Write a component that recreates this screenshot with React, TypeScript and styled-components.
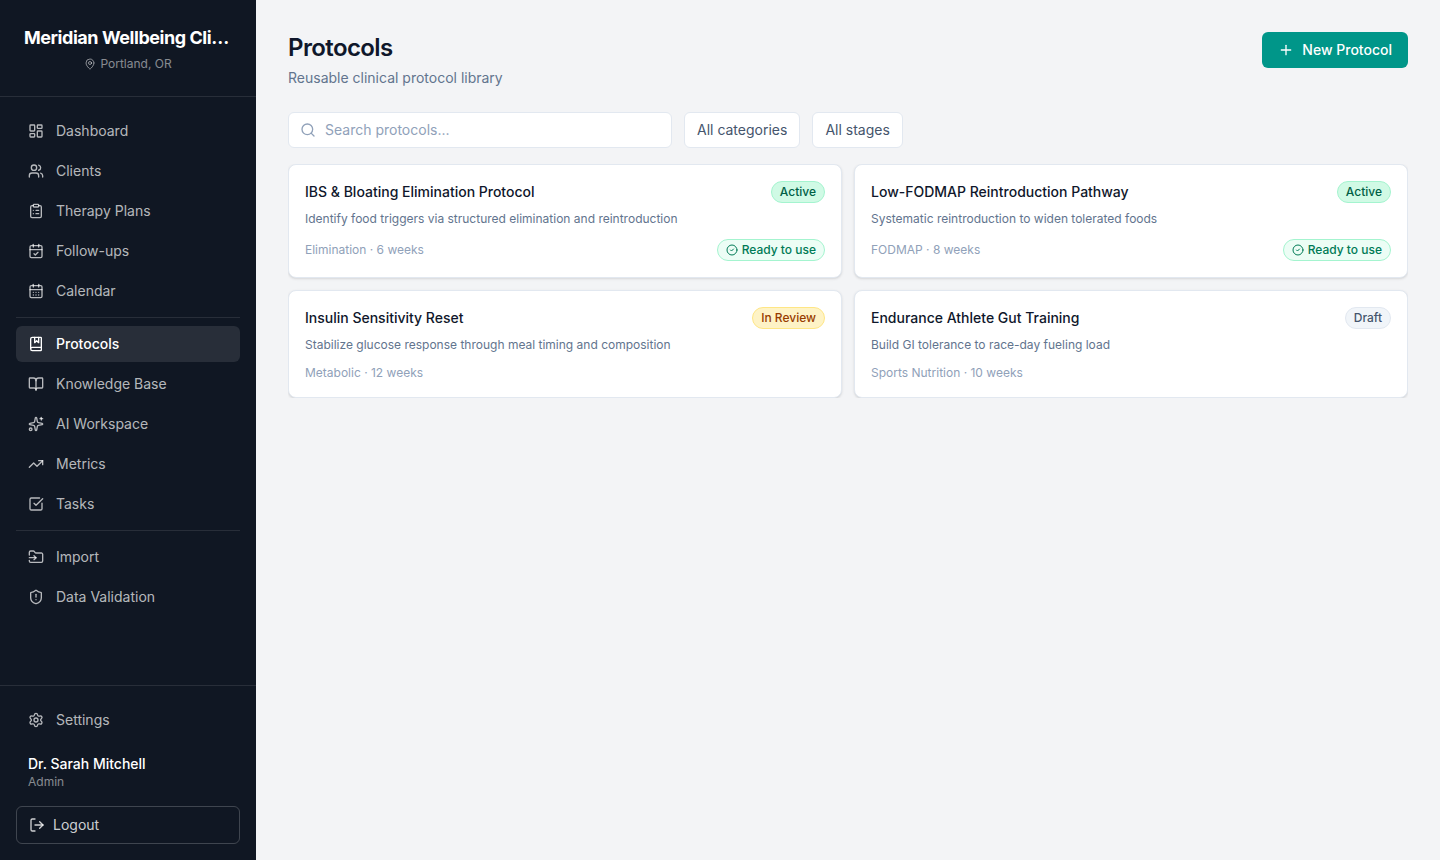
import React from "react";
import styled, { createGlobalStyle, css } from "styled-components";
import {
  BookMarked,
  BookOpen,
  CalendarCheck,
  CalendarDays,
  CircleCheck,
  ClipboardList,
  FolderInput,
  LayoutDashboard,
  LogOut,
  MapPin,
  Plus,
  Search,
  Settings,
  ShieldAlert,
  Sparkles,
  SquareCheckBig,
  TrendingUp,
  Users,
  type LucideIcon,
} from "lucide-react";

const GlobalStyle = createGlobalStyle`
  *, *::before, *::after { box-sizing: border-box; }
  body {
    margin: 0;
    background: #f3f4f6;
    color: #0f172b;
    font-family: Inter, "Liberation Sans", sans-serif;
    font-size: 14px;
    line-height: 20px;
  }
  h1, h2, p { margin: 0; }
  button, input, select { font: inherit; }
`;

const tightTracking = css`
  letter-spacing: -0.025em;
`;

const Shell = styled.div`
  display: flex;
  min-height: 100vh;
`;

const Sidebar = styled.aside`
  display: flex;
  flex-direction: column;
  flex: 0 0 256px;
  min-width: 0;
  height: 100vh;
  position: sticky;
  top: 0;
  background: #101723;
  color: #fff;
`;

const Brand = styled.div`
  padding: 24px;
  border-bottom: 1px solid rgba(255, 255, 255, 0.1);
  text-align: center;
`;

const BrandName = styled.div`
  ${tightTracking}
  overflow: hidden;
  text-overflow: ellipsis;
  white-space: nowrap;
  font-size: 18px;
  line-height: 28px;
  font-weight: 700;
`;

const Location = styled.div`
  display: flex;
  align-items: center;
  justify-content: center;
  gap: 4px;
  margin-top: 4px;
  font-size: 12px;
  line-height: 16px;
  color: rgba(255, 255, 255, 0.5);
`;

const Nav = styled.nav`
  display: flex;
  flex: 1;
  flex-direction: column;
  gap: 4px;
  padding: 16px;
  overflow-y: auto;
`;

const NavLink = styled.a<{ $active?: boolean }>`
  display: flex;
  flex-shrink: 0;
  align-items: center;
  gap: 12px;
  height: 36px;
  padding: 0 12px;
  border-radius: 6px;
  color: rgba(255, 255, 255, 0.7);
  text-decoration: none;
  ${(p) =>
    p.$active &&
    css`
      background: rgba(255, 255, 255, 0.1);
      color: #fff;
      font-weight: 500;
    `}
`;

const Divider = styled.hr`
  width: 100%;
  height: 1px;
  margin: 4px 0;
  border: 0;
  flex-shrink: 0;
  background: rgba(255, 255, 255, 0.1);
`;

const SidebarFooter = styled.div`
  display: flex;
  flex-direction: column;
  gap: 16px;
  padding: 16px;
  border-top: 1px solid rgba(255, 255, 255, 0.1);
`;

const Account = styled.div`
  padding: 0 12px;
`;

const AccountName = styled.p`
  font-weight: 500;
`;

const AccountRole = styled.p`
  font-size: 12px;
  line-height: 16px;
  color: rgba(255, 255, 255, 0.5);
`;

const LogoutButton = styled.button`
  display: flex;
  align-items: center;
  gap: 8px;
  height: 38px;
  padding: 0 12px;
  border: 1px solid rgba(255, 255, 255, 0.2);
  border-radius: 6px;
  background: transparent;
  color: rgba(255, 255, 255, 0.8);
  cursor: pointer;
`;

const Main = styled.main`
  flex: 1;
  min-width: 0;
  padding: 32px;
`;

const PageHeader = styled.header`
  display: flex;
  align-items: flex-start;
  justify-content: space-between;
  margin-bottom: 24px;
`;

const PageTitle = styled.h1`
  ${tightTracking}
  font-size: 24px;
  line-height: 32px;
  font-weight: 600;
`;

const PageSubtitle = styled.p`
  margin-top: 4px;
  color: #62748e;
`;

const PrimaryButton = styled.button`
  display: flex;
  align-items: center;
  gap: 8px;
  height: 36px;
  padding: 0 16px;
  border: 0;
  border-radius: 6px;
  background: #009689;
  color: #fff;
  font-weight: 500;
  cursor: pointer;
`;

const Filters = styled.div`
  display: flex;
  gap: 12px;
  margin-bottom: 16px;
`;

const control = css`
  height: 36px;
  border: 1px solid #e2e8f0;
  border-radius: 6px;
  background: #fff;
`;

const SearchField = styled.div`
  position: relative;
  flex: 0 1 384px;
`;

const SearchIcon = styled(Search)`
  position: absolute;
  top: 10px;
  left: 12px;
  color: #90a1b9;
  pointer-events: none;
`;

const SearchInput = styled.input`
  ${control}
  display: block;
  width: 100%;
  padding: 0 12px 2px 36px;
  color: #0f172b;
  &::placeholder {
    color: #90a1b9;
  }
`;

const FilterSelect = styled.select`
  ${control}
  appearance: none;
  field-sizing: content;
  padding: 0 12px;
  color: #45556c;
`;

const CardGrid = styled.section`
  display: grid;
  grid-template-columns: repeat(2, minmax(0, 1fr));
  gap: 12px;
  overflow: hidden;
`;

const Card = styled.article`
  padding: 16px;
  border: 1px solid #e2e8f0;
  border-radius: 8px;
  background: #fff;
  box-shadow: 0 1px 3px rgba(0, 0, 0, 0.1), 0 1px 2px -1px rgba(0, 0, 0, 0.1);
`;

const CardRow = styled.div`
  display: flex;
  align-items: center;
  justify-content: space-between;
  gap: 8px;
`;

const CardTitle = styled.h2`
  font-size: 14px;
  line-height: 20px;
  font-weight: 500;
`;

const CardSummary = styled.p`
  margin: 8px 0 12px;
  font-size: 12px;
  line-height: 16px;
  color: #62748e;
`;

const CardMeta = styled.span`
  font-size: 12px;
  line-height: 16px;
  color: #90a1b9;
`;

type Tone = "active" | "review" | "draft" | "ready";

const tones: Record<Tone, { background: string; border: string; color: string }> = {
  active: { background: "#d0fae5", border: "#a4f4cf", color: "#006045" },
  review: { background: "#fef3c6", border: "#fee685", color: "#973c00" },
  draft: { background: "#f1f5f9", border: "#e2e8f0", color: "#45556c" },
  ready: { background: "#ecfdf5", border: "#a4f4cf", color: "#007a55" },
};

const Badge = styled.span<{ $tone: Tone }>`
  display: inline-flex;
  flex-shrink: 0;
  align-items: center;
  gap: 4px;
  padding: 2px 8px;
  border: 1px solid ${(p) => tones[p.$tone].border};
  border-radius: 11px;
  background: ${(p) => tones[p.$tone].background};
  color: ${(p) => tones[p.$tone].color};
  font-size: 12px;
  line-height: 16px;
  font-weight: 500;
`;

interface NavItem {
  label: string;
  icon: LucideIcon;
}

const navGroups: NavItem[][] = [
  [
    { label: "Dashboard", icon: LayoutDashboard },
    { label: "Clients", icon: Users },
    { label: "Therapy Plans", icon: ClipboardList },
    { label: "Follow-ups", icon: CalendarCheck },
    { label: "Calendar", icon: CalendarDays },
  ],
  [
    { label: "Protocols", icon: BookMarked },
    { label: "Knowledge Base", icon: BookOpen },
    { label: "AI Workspace", icon: Sparkles },
    { label: "Metrics", icon: TrendingUp },
    { label: "Tasks", icon: SquareCheckBig },
  ],
  [
    { label: "Import", icon: FolderInput },
    { label: "Data Validation", icon: ShieldAlert },
  ],
];

interface Protocol {
  title: string;
  summary: string;
  meta: string;
  status: string;
  tone: Tone;
  ready?: boolean;
}

const protocols: Protocol[] = [
  {
    title: "IBS & Bloating Elimination Protocol",
    summary: "Identify food triggers via structured elimination and reintroduction",
    meta: "Elimination · 6 weeks",
    status: "Active",
    tone: "active",
    ready: true,
  },
  {
    title: "Low-FODMAP Reintroduction Pathway",
    summary: "Systematic reintroduction to widen tolerated foods",
    meta: "FODMAP · 8 weeks",
    status: "Active",
    tone: "active",
    ready: true,
  },
  {
    title: "Insulin Sensitivity Reset",
    summary: "Stabilize glucose response through meal timing and composition",
    meta: "Metabolic · 12 weeks",
    status: "In Review",
    tone: "review",
  },
  {
    title: "Endurance Athlete Gut Training",
    summary: "Build GI tolerance to race-day fueling load",
    meta: "Sports Nutrition · 10 weeks",
    status: "Draft",
    tone: "draft",
  },
];

export default function App() {
  return (
    <>
      <GlobalStyle />
      <Shell>
        <Sidebar>
          <Brand>
            <BrandName>Meridian Wellbeing Clinic</BrandName>
            <Location>
              <MapPin size={12} />
              Portland, OR
            </Location>
          </Brand>
          <Nav aria-label="Main">
            {navGroups.map((group, index) => (
              <React.Fragment key={group[0].label}>
                {index > 0 && <Divider />}
                {group.map(({ label, icon: Icon }) => (
                  <NavLink
                    key={label}
                    href="#"
                    $active={label === "Protocols"}
                    aria-current={label === "Protocols" ? "page" : undefined}
                  >
                    <Icon size={16} />
                    {label}
                  </NavLink>
                ))}
              </React.Fragment>
            ))}
          </Nav>
          <SidebarFooter>
            <NavLink href="#">
              <Settings size={16} />
              Settings
            </NavLink>
            <Account>
              <AccountName>Dr. Sarah Mitchell</AccountName>
              <AccountRole>Admin</AccountRole>
            </Account>
            <LogoutButton type="button">
              <LogOut size={16} />
              Logout
            </LogoutButton>
          </SidebarFooter>
        </Sidebar>
        <Main>
          <PageHeader>
            <div>
              <PageTitle>Protocols</PageTitle>
              <PageSubtitle>Reusable clinical protocol library</PageSubtitle>
            </div>
            <PrimaryButton type="button">
              <Plus size={16} />
              New Protocol
            </PrimaryButton>
          </PageHeader>
          <Filters>
            <SearchField>
              <SearchInput type="text" placeholder="Search protocols..." aria-label="Search protocols" />
              <SearchIcon size={16} />
            </SearchField>
            <FilterSelect aria-label="Category">
              <option>All categories</option>
            </FilterSelect>
            <FilterSelect aria-label="Stage">
              <option>All stages</option>
            </FilterSelect>
          </Filters>
          <CardGrid aria-label="Protocols">
            {protocols.map((protocol) => (
              <Card key={protocol.title}>
                <CardRow>
                  <CardTitle>{protocol.title}</CardTitle>
                  <Badge $tone={protocol.tone}>{protocol.status}</Badge>
                </CardRow>
                <CardSummary>{protocol.summary}</CardSummary>
                <CardRow>
                  <CardMeta>{protocol.meta}</CardMeta>
                  {protocol.ready && (
                    <Badge $tone="ready">
                      <CircleCheck size={12} />
                      Ready to use
                    </Badge>
                  )}
                </CardRow>
              </Card>
            ))}
          </CardGrid>
        </Main>
      </Shell>
    </>
  );
}
